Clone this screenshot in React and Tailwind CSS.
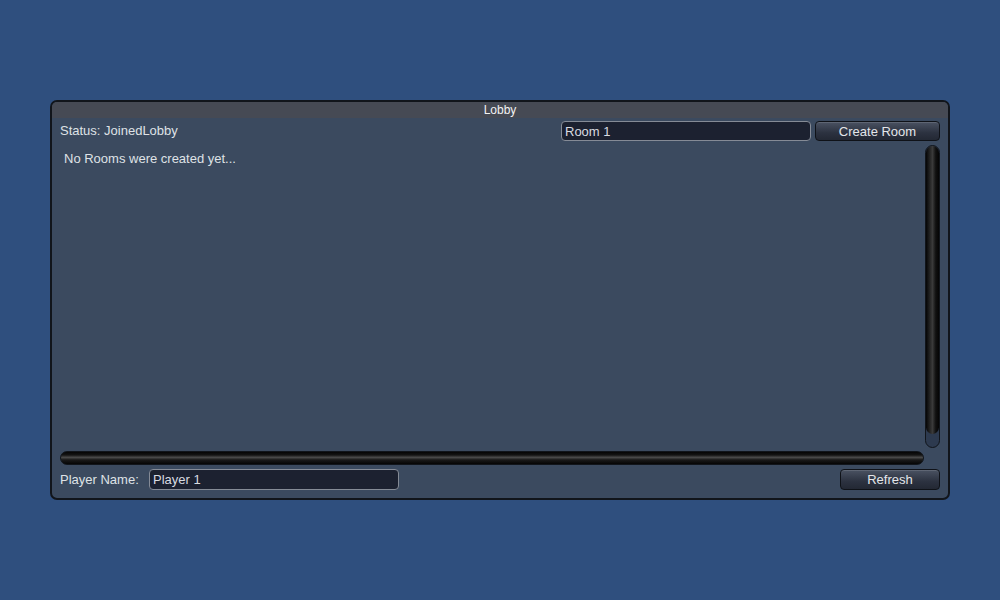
import React from 'react';

// Lobby window, dark GUI skin on a blue backdrop

function Button({ children, className = '' }) {
  return (
    <button
      className={`flex items-center justify-center rounded-[4px] border border-[#0f1218] bg-[linear-gradient(to_bottom,#4a5262,#2c3240_60%,#232834)] text-[13px] leading-none text-[#e4e6ea] shadow-[inset_0_1px_0_rgba(255,255,255,0.12)] ${className}`}
    >
      {children}
    </button>
  );
}

function TextField({ value, className = '' }) {
  return (
    <div
      className={`flex items-center rounded-[4px] border border-[#858b96] bg-[#1c2130] pl-[3px] text-[13px] leading-none text-[#d8dbe0] ${className}`}
    >
      {value}
    </div>
  );
}

export default function App() {
  return (
    <div
      className="flex h-[600px] w-[1000px] items-center justify-center bg-[#2f4f7e]"
      style={{ fontFamily: '"Liberation Sans", Arial, sans-serif' }}
    >
      <div className="flex h-[400px] w-[900px] flex-col overflow-hidden rounded-[7px] border-2 border-[#11151b] bg-[#3b4a5f]">
        {/* Title */}
        <div className="flex h-[16px] items-center justify-center bg-[#464a54] text-[12px] leading-none text-[#f2f2f2]">
          Lobby
        </div>

        <div className="flex flex-1 flex-col px-2 pb-2 pt-[3px]">
          {/* Top row */}
          <div className="flex h-[20px] items-center">
            <span className="flex-1 text-[13px] text-[#dfe2e6]">Status: JoinedLobby</span>
            <TextField value="Room 1" className="h-[20px] w-[250px]" />
            <Button className="ml-[4px] h-[20px] w-[125px]">Create Room</Button>
          </div>

          {/* Room list with scrollbars */}
          <div className="mt-[4px] grid h-[320px] grid-cols-[864px_15px] grid-rows-[303px_14px] gap-x-[1px] gap-y-[3px]">
            <div className="pl-[4px] pt-[7px] text-[13px] leading-none text-[#dfe2e6]">
              No Rooms were created yet...
            </div>
            <div className="rounded-full border border-[#11151b] bg-[#2d3a4f]">
              <div className="h-[288px] rounded-full bg-[linear-gradient(to_right,#050505,#2a2a2a_35%,#3a3a3a_50%,#111_75%,#050505)]" />
            </div>
            <div className="rounded-full border border-[#11151b] bg-[linear-gradient(to_bottom,#050505,#141414_25%,#4a4a4a_45%,#1a1a1a_65%,#050505)]" />
            <div />
          </div>

          {/* Bottom row */}
          <div className="mt-[4px] flex h-[21px] items-center">
            <span className="w-[89px] text-[13px] text-[#dfe2e6]">Player Name:</span>
            <TextField value="Player 1" className="h-[21px] w-[250px]" />
            <div className="flex-1" />
            <Button className="h-[21px] w-[100px]">Refresh</Button>
          </div>
        </div>
      </div>
    </div>
  );
}
